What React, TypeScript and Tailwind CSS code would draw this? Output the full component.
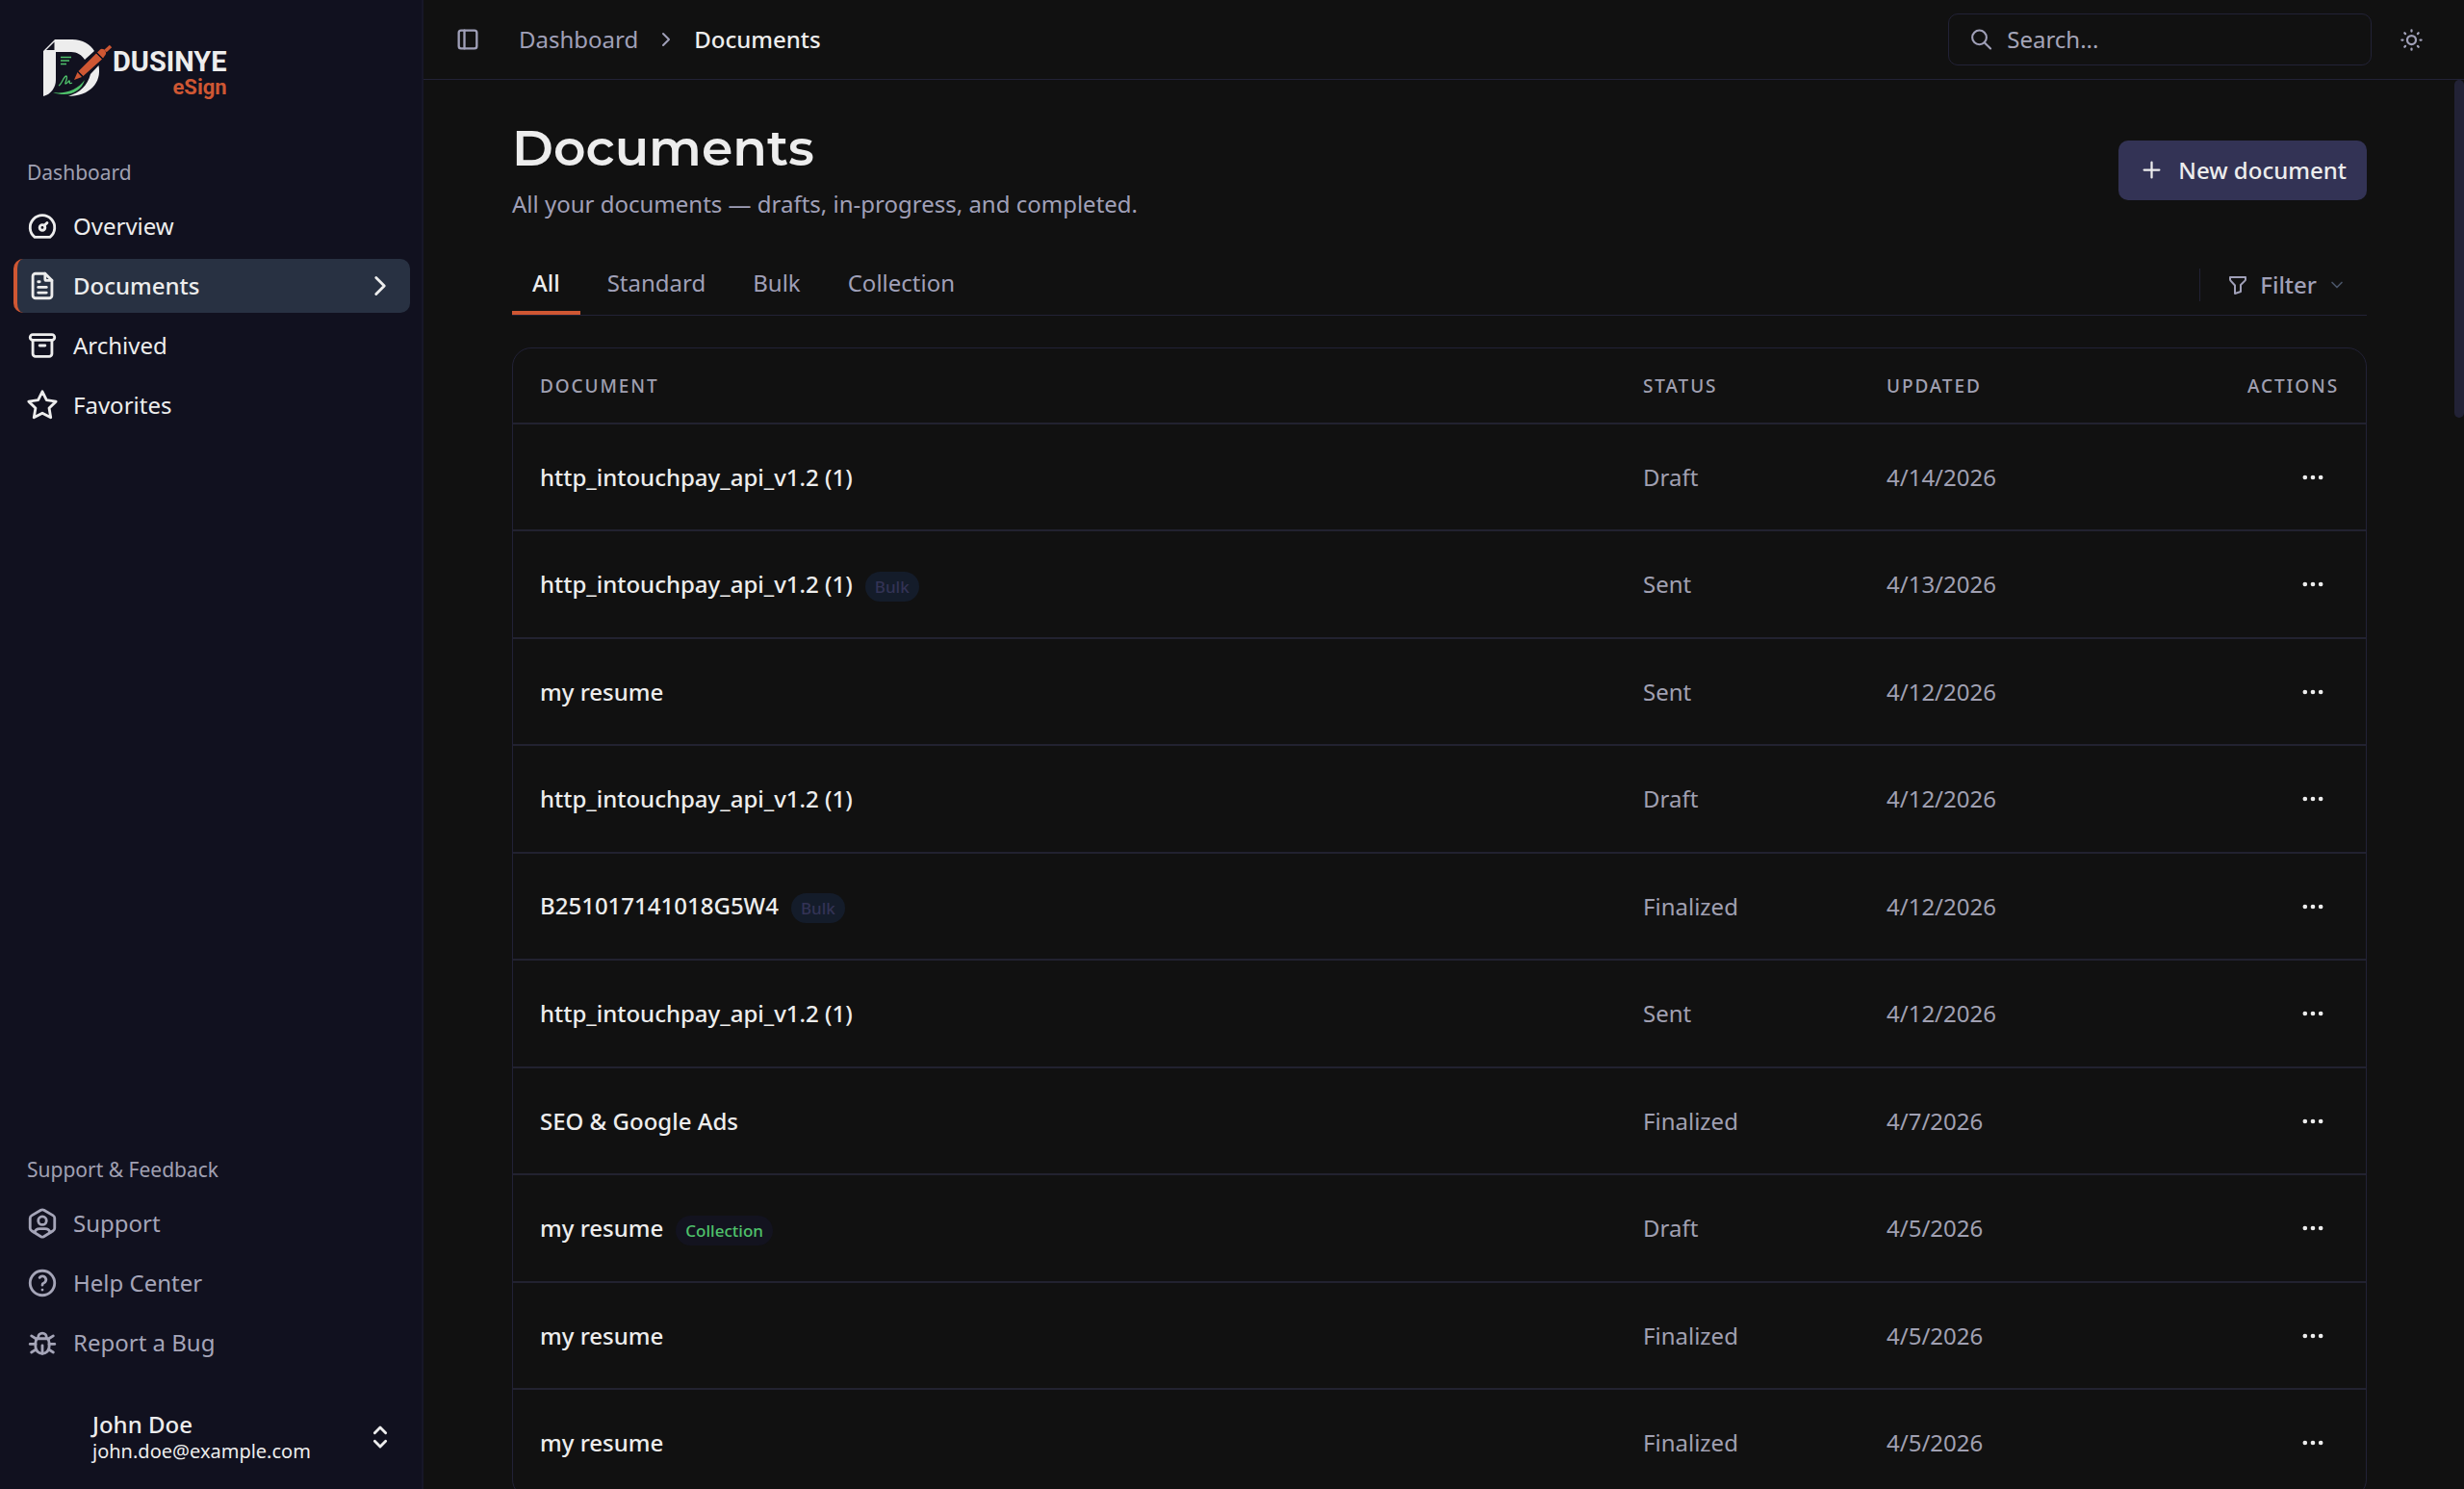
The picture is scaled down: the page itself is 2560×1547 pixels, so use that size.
import type { ReactNode } from "react";
import {
  TbArchive,
  TbBug,
  TbChevronDown,
  TbChevronRight,
  TbDashboard,
  TbDots,
  TbFileText,
  TbFilter,
  TbHelp,
  TbLayoutSidebar,
  TbPlus,
  TbSearch,
  TbSelector,
  TbStar,
  TbSun,
  TbUserHexagon,
} from "react-icons/tb";

interface DocumentRow {
  id: number;
  name: string;
  tag?: "Bulk" | "Collection";
  status: string;
  updated: string;
}

const documents: DocumentRow[] = [
  { id: 1, name: "http_intouchpay_api_v1.2 (1)", status: "Draft", updated: "4/14/2026" },
  { id: 2, name: "http_intouchpay_api_v1.2 (1)", tag: "Bulk", status: "Sent", updated: "4/13/2026" },
  { id: 3, name: "my resume", status: "Sent", updated: "4/12/2026" },
  { id: 4, name: "http_intouchpay_api_v1.2 (1)", status: "Draft", updated: "4/12/2026" },
  { id: 5, name: "B251017141018G5W4", tag: "Bulk", status: "Finalized", updated: "4/12/2026" },
  { id: 6, name: "http_intouchpay_api_v1.2 (1)", status: "Sent", updated: "4/12/2026" },
  { id: 7, name: "SEO & Google Ads", status: "Finalized", updated: "4/7/2026" },
  { id: 8, name: "my resume", tag: "Collection", status: "Draft", updated: "4/5/2026" },
  { id: 9, name: "my resume", status: "Finalized", updated: "4/5/2026" },
  { id: 10, name: "my resume", status: "Finalized", updated: "4/5/2026" },
];

const tabs = ["All", "Standard", "Bulk", "Collection"];

function Logo() {
  return (
    <a href="#" aria-label="Dusinye eSign" className="flex items-start px-[31px]">
      <svg viewBox="0 0 72 60" className="h-[60px] w-[72px] shrink-0" fill="none">
        {/* folded page shaped like a D */}
        <path
          fill="#ededed"
          d="M12 0H30C41 0 49 5 53 12L43 21C40 16 35 13 29 13H13V42C13 50 8 57 0 59V12Z"
        />
        <path fill="#11111f" d="M3 11 11.500 2.500V11Z" />
        <path fill="#ededed" d="M57.500 27C61 45 48 59 26 59C38 55 46 48 49 36Z" />
        <path fill="#4fc26b" d="M10 55C23 57 36 52 43 42C39 56 24 60 10 55Z" />
        <path stroke="#4fc26b" strokeWidth="1.300" d="M18 18.500H29M18 22H27M18 25.500H24" />
        <path
          stroke="#4fc26b"
          strokeWidth="1.300"
          d="M16 48C19 47 21 38 24 38C26 39 22 46 23 46C25 46 26 43 27 43C28 44 26 47 30 45"
        />
        {/* pen */}
        <path fill="#cf5733" d="M32 42 35.500 34 40 39ZM36.500 33 55 14.500 61 20.500 41.500 38Z" />
        <path fill="#cf5733" d="M56 13.500 59 10.500C62 8 67 13 64.500 16L62 19.500Z" />
        <path stroke="#cf5733" strokeWidth="3.500" d="M64.500 12 70 7" />
        <path stroke="#11111f" strokeWidth="1" d="M36 33.500 41 38.500M55.500 14 61.500 20" />
      </svg>
      <span className="flex flex-col items-end pt-2 font-['Roboto',sans-serif] font-bold">
        <span className="text-[29px] leading-[30px] text-[#ededed]">DUSINYE</span>
        <span className="text-[22px] leading-[24px] text-[#cf5733]">eSign</span>
      </span>
    </a>
  );
}

interface NavItemProps {
  icon: ReactNode;
  label: string;
  active?: boolean;
  muted?: boolean;
}

function NavItem({ icon, label, active, muted }: NavItemProps) {
  return (
    <li>
      <a
        href="#"
        aria-current={active ? "page" : undefined}
        className={`flex h-14 items-center gap-[15px] rounded-[10px] border-l-4 pr-[14px] pl-[9px] ${
          active ? "border-[#cf5733] bg-[#283142] font-medium" : "border-transparent"
        } ${muted ? "text-[#a5a5b8]" : "text-[#ededed]"}`}
      >
        {icon}
        <span className="flex-1">{label}</span>
        {active && <TbChevronRight className="size-[34px]" />}
      </a>
    </li>
  );
}

function Sidebar() {
  return (
    <aside className="flex w-[440px] shrink-0 flex-col border-r-2 border-[#171728] bg-[#11111f] pt-[41px] pr-[12px] pb-[26px] pl-[14px]">
      <Logo />
      <nav className="mt-[62px] flex flex-1 flex-col justify-between">
        <div>
          <h2 className="mb-[14px] px-[14px] text-[21px] leading-7 text-[#a0a0b2]">Dashboard</h2>
          <ul className="flex flex-col gap-[6px]">
            <NavItem icon={<TbDashboard className="size-[34px]" />} label="Overview" />
            <NavItem icon={<TbFileText className="size-[34px]" />} label="Documents" active />
            <NavItem icon={<TbArchive className="size-[34px]" />} label="Archived" />
            <NavItem icon={<TbStar className="size-[34px]" />} label="Favorites" />
          </ul>
        </div>
        <div>
          <h2 className="mb-[14px] px-[14px] text-[21px] leading-7 text-[#a0a0b2]">Support &amp; Feedback</h2>
          <ul className="flex flex-col gap-[6px]">
            <NavItem icon={<TbUserHexagon className="size-[34px]" />} label="Support" muted />
            <NavItem icon={<TbHelp className="size-[34px]" />} label="Help Center" muted />
            <NavItem icon={<TbBug className="size-[34px]" />} label="Report a Bug" muted />
          </ul>
        </div>
      </nav>
      <button className="mt-[42px] flex items-center justify-between pr-[14px] pl-[82px] text-left text-[#ededed]">
        <span className="flex flex-col">
          <span className="leading-[30px] font-medium">John Doe</span>
          <span className="text-[20px] leading-[26px]">john.doe@example.com</span>
        </span>
        <TbSelector className="size-[34px]" />
      </button>
    </aside>
  );
}

function Header() {
  return (
    <header className="flex h-[83px] shrink-0 items-center border-b border-[#222236] pr-[41px] pl-[32px] text-[#a0a0b8]">
      <button aria-label="Toggle sidebar">
        <TbLayoutSidebar className="size-7" />
      </button>
      <nav aria-label="Breadcrumb" className="ml-[39px] flex items-center gap-[17px]">
        <a href="#">Dashboard</a>
        <TbChevronRight className="size-6" />
        <span className="font-medium text-[#ededed]">Documents</span>
      </nav>
      <label className="ml-auto flex h-[54px] w-[440px] items-center gap-[14px] rounded-[10px] border border-[#222236] px-[21px]">
        <TbSearch className="size-7" />
        <input
          type="search"
          placeholder="Search..."
          aria-label="Search"
          className="w-full bg-transparent outline-none placeholder:text-[#a5a5b8]"
        />
      </label>
      <button aria-label="Toggle theme" className="ml-7">
        <TbSun className="size-[27px]" />
      </button>
    </header>
  );
}

function TabBar() {
  return (
    <div className="mt-[36px] flex items-stretch justify-between border-b border-[#222236]">
      <div role="tablist" className="flex gap-[7px]">
        {tabs.map((tab, i) => (
          <button
            key={tab}
            role="tab"
            aria-selected={i === 0}
            className={`h-[62px] border-b-4 px-[21px] ${
              i === 0 ? "border-[#cf5733] font-medium text-[#ededed]" : "border-transparent text-[#a0a0b8]"
            }`}
          >
            {tab}
          </button>
        ))}
      </div>
      <div className="flex items-center">
        <span className="h-[34px] w-px bg-[#222236]" />
        <button className="flex items-center gap-[11px] pr-[21px] pl-[27px] font-medium text-[#a0a0b8]">
          <TbFilter className="size-6" />
          Filter
          <TbChevronDown className="size-5 text-[#4a5568]" />
        </button>
      </div>
    </div>
  );
}

function Tag({ tag }: { tag: "Bulk" | "Collection" }) {
  return (
    <span
      className={`rounded-full px-[10px] text-[17px] leading-[31px] font-medium ${
        tag === "Bulk" ? "bg-[#141c2a] text-[#333355]" : "bg-[#13131f] text-[#4fc26b]"
      }`}
    >
      {tag}
    </span>
  );
}

function DocumentsTable() {
  return (
    <div className="mt-[33px] rounded-[20px] border border-[#222236]">
      <table className="w-full table-fixed text-left">
        <thead className="text-[19px] tracking-widest text-[#a0a0b2] uppercase">
          <tr className="h-[78px] border-b-2 border-[#222230]">
            <th className="px-7 font-medium">Document</th>
            <th className="w-[253px] px-7 font-medium">Status</th>
            <th className="w-[253px] px-7 font-medium">Updated</th>
            <th className="w-[273px] px-7 text-right font-medium">Actions</th>
          </tr>
        </thead>
        <tbody className="text-[#a0a0b2]">
          {documents.map((doc) => (
            <tr key={doc.id} className="border-b-2 border-[#222230] odd:h-[111px] even:h-[112px]">
              <td className="px-7">
                <div className="flex items-baseline gap-[13px]">
                  <a href="#" className="font-medium text-[#ededed]">
                    {doc.name}
                  </a>
                  {doc.tag && <Tag tag={doc.tag} />}
                </div>
              </td>
              <td className="px-7">{doc.status}</td>
              <td className="px-7">{doc.updated}</td>
              <td className="px-7">
                <button
                  aria-label={`Actions for ${doc.name}`}
                  className="ml-auto flex size-[54px] items-center justify-center text-[#ededed]"
                >
                  <TbDots className="size-7" />
                </button>
              </td>
            </tr>
          ))}
        </tbody>
      </table>
    </div>
  );
}

function App() {
  return (
    <div className="flex h-screen overflow-hidden bg-[#111111] font-['Noto_Sans',sans-serif] text-[24px] leading-[34px]">
      <Sidebar />
      <div className="flex min-w-0 flex-1 flex-col">
        <Header />
        <div className="flex min-h-0 flex-1">
          <main className="min-w-0 flex-1 overflow-hidden pt-[41px] pr-[91px] pl-[92px]">
            <div className="flex items-center justify-between">
              <div>
                <h1 className="font-['Montserrat','Inter',sans-serif] text-[52px] leading-[60px] font-semibold text-[#ededed]">
                  Documents
                </h1>
                <p className="mt-[11px] text-[#a0a0b8]">All your documents — drafts, in-progress, and completed.</p>
              </div>
              <button className="flex h-[62px] items-center gap-[14px] rounded-[10px] bg-[#333355] px-[21px] font-medium text-[#ededed]">
                <TbPlus className="size-[27px]" />
                New document
              </button>
            </div>
            <TabBar />
            <DocumentsTable />
          </main>
          <div className="w-[10px] shrink-0">
            <div className="h-[351px] rounded-full bg-[#222236]" />
          </div>
        </div>
      </div>
    </div>
  );
}

export default App;
